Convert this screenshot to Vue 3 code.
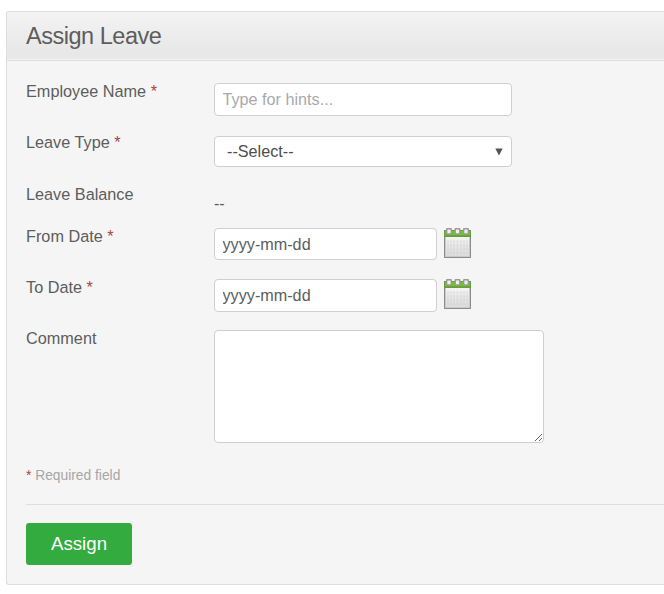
<script setup>
import { ref } from 'vue'

const employee = ref('')
const leaveType = ref('')
const dates = ref([
  { id: 'from', label: 'From Date', value: 'yyyy-mm-dd' },
  { id: 'to', label: 'To Date', value: 'yyyy-mm-dd' },
])
const comment = ref('')
</script>

<template>
  <section class="card">
    <header class="head"><h1>Assign Leave</h1></header>
    <form class="body" @submit.prevent>
      <div class="row">
        <label for="employee">Employee Name <em>*</em></label>
        <input id="employee" v-model="employee" class="field wide" type="text" placeholder="Type for hints...">
      </div>
      <div class="row type">
        <label for="type">Leave Type <em>*</em></label>
        <div class="select">
          <select id="type" v-model="leaveType" class="field">
            <option value="">--Select--</option>
          </select>
          <svg class="arrow" viewBox="0 0 8 8" width="8" height="8"><path d="M0.3 0.5H7.7L4 7.6Z" fill="#555" /></svg>
        </div>
      </div>
      <div class="row balance">
        <label>Leave Balance</label>
        <span class="value">--</span>
      </div>
      <div v-for="d in dates" :key="d.id" class="row">
        <label :for="d.id">{{ d.label }} <em>*</em></label>
        <div class="date">
          <input :id="d.id" v-model="d.value" class="field" :class="d.id" type="text">
          <svg class="cal" viewBox="0 0 27 30" width="27" height="30">
            <defs>
              <linearGradient :id="d.id + '-page'" x1="0" y1="0" x2="0" y2="1">
                <stop offset="0" stop-color="#f6f6f6" />
                <stop offset="0.5" stop-color="#e6e6e6" />
                <stop offset="1" stop-color="#dadada" />
              </linearGradient>
            </defs>
            <rect x="0.5" y="8.5" width="26" height="21" :fill="`url(#${d.id}-page)`" stroke="#8c8c8c" />
            <path d="M1.5 9V28.5H25.5V9" fill="none" stroke="#c9c9c9" />
            <path d="M4 12V26M7 12V26M10 12V26M13.5 12V26M17 12V26M20 12V26M23 12V26" stroke="#aaa" stroke-width="2" stroke-dasharray="3 0.8" opacity=".16" />
            <rect x="0" y="2" width="27" height="7" fill="#78bd31" />
            <path d="M0 2.5H27M0.5 2V9M26.5 2V9M0 8.5H27" stroke="#669f39" />
            <path d="M1 7.5H26" stroke="#68a82c" />
            <g fill="#f0f0f0" stroke="#999" stroke-width="1.4">
              <rect x="2.7" y="0.7" width="4.6" height="5.3" rx="0.4" />
              <rect x="11.2" y="0.7" width="4.6" height="5.3" rx="0.4" />
              <rect x="19.7" y="0.7" width="4.6" height="5.3" rx="0.4" />
            </g>
          </svg>
        </div>
      </div>
      <div class="row comment">
        <label for="comment">Comment</label>
        <textarea id="comment" v-model="comment" class="field" />
      </div>
      <p class="required"><em>*</em> Required field</p>
      <div class="actions"><button type="submit">Assign</button></div>
    </form>
  </section>
</template>

<style>
body {
  background: #fff;
}
</style>

<style scoped>
* {
  box-sizing: border-box;
  font-family: "Liberation Sans", Arial, sans-serif;
}
.card {
  margin: 11px 0 0 6px;
  height: 574px;
  border: 1px solid #dedede;
  border-right: 0;
  border-radius: 3px 0 0 3px;
  background: #f5f5f5;
  color: #5d5d5d;
  font-size: 16px;
}
.head {
  height: 49px;
  padding-left: 19px;
  border-bottom: 1px solid #dedede;
  border-radius: 2px 0 0;
  background: linear-gradient(#f3f3f3, #e8e8e8 80%);
  box-shadow: inset 0 -1px #f3f3f3;
}
h1 {
  margin: 0;
  font-size: 23.5px;
  font-weight: 400;
  letter-spacing: -0.48px;
  line-height: 48px;
}
.body {
  padding: 22px 0 0 19px;
}
.row {
  display: grid;
  grid-template-columns: 188px auto;
  justify-content: start;
  align-items: start;
  height: 51px;
}
label {
  margin-top: -1px;
  font-size: 16.25px;
  line-height: 18px;
}
em {
  color: #aa4442;
  font-style: normal;
}
.field {
  display: block;
  margin: 0;
  padding: 0 7.5px;
  border: 1px solid #cfcfcf;
  border-radius: 4px;
  outline: 0;
  background: #fff;
  color: #5d5d5d;
  font-size: 16.2px;
}
.field::placeholder {
  color: #a9a9a9;
  opacity: 1;
}
.wide {
  width: 298px;
  height: 33px;
}
.type {
  height: 52px;
}
.select {
  position: relative;
  margin-top: 2px;
}
.select .field {
  appearance: none;
  width: 298px;
  height: 31px;
  padding: 0 8px 2px 12px;
  color: #4d4d4d;
}
.arrow {
  position: absolute;
  top: 12px;
  right: 9px;
}
.balance {
  height: 42px;
}
.value {
  margin-top: 9px;
  line-height: 18px;
}
.date {
  display: flex;
  gap: 7px;
}
.date .field {
  width: 223px;
  height: 33px;
}
.date .from {
  height: 32px;
}
.comment {
  height: 113px;
}
.comment .field {
  width: 330px;
  height: 113px;
}
.required {
  margin: 25px 0 0;
  color: #a6a6a6;
  font-size: 13.8px;
  line-height: 16px;
}
.actions {
  margin-top: 20px;
  padding-top: 18px;
  border-top: 1px solid #dedede;
}
button {
  display: block;
  width: 106px;
  height: 42px;
  padding: 0;
  border: 0;
  border-radius: 3px;
  background: #34ab3f;
  color: #fff;
  font-size: 18.7px;
}
</style>
